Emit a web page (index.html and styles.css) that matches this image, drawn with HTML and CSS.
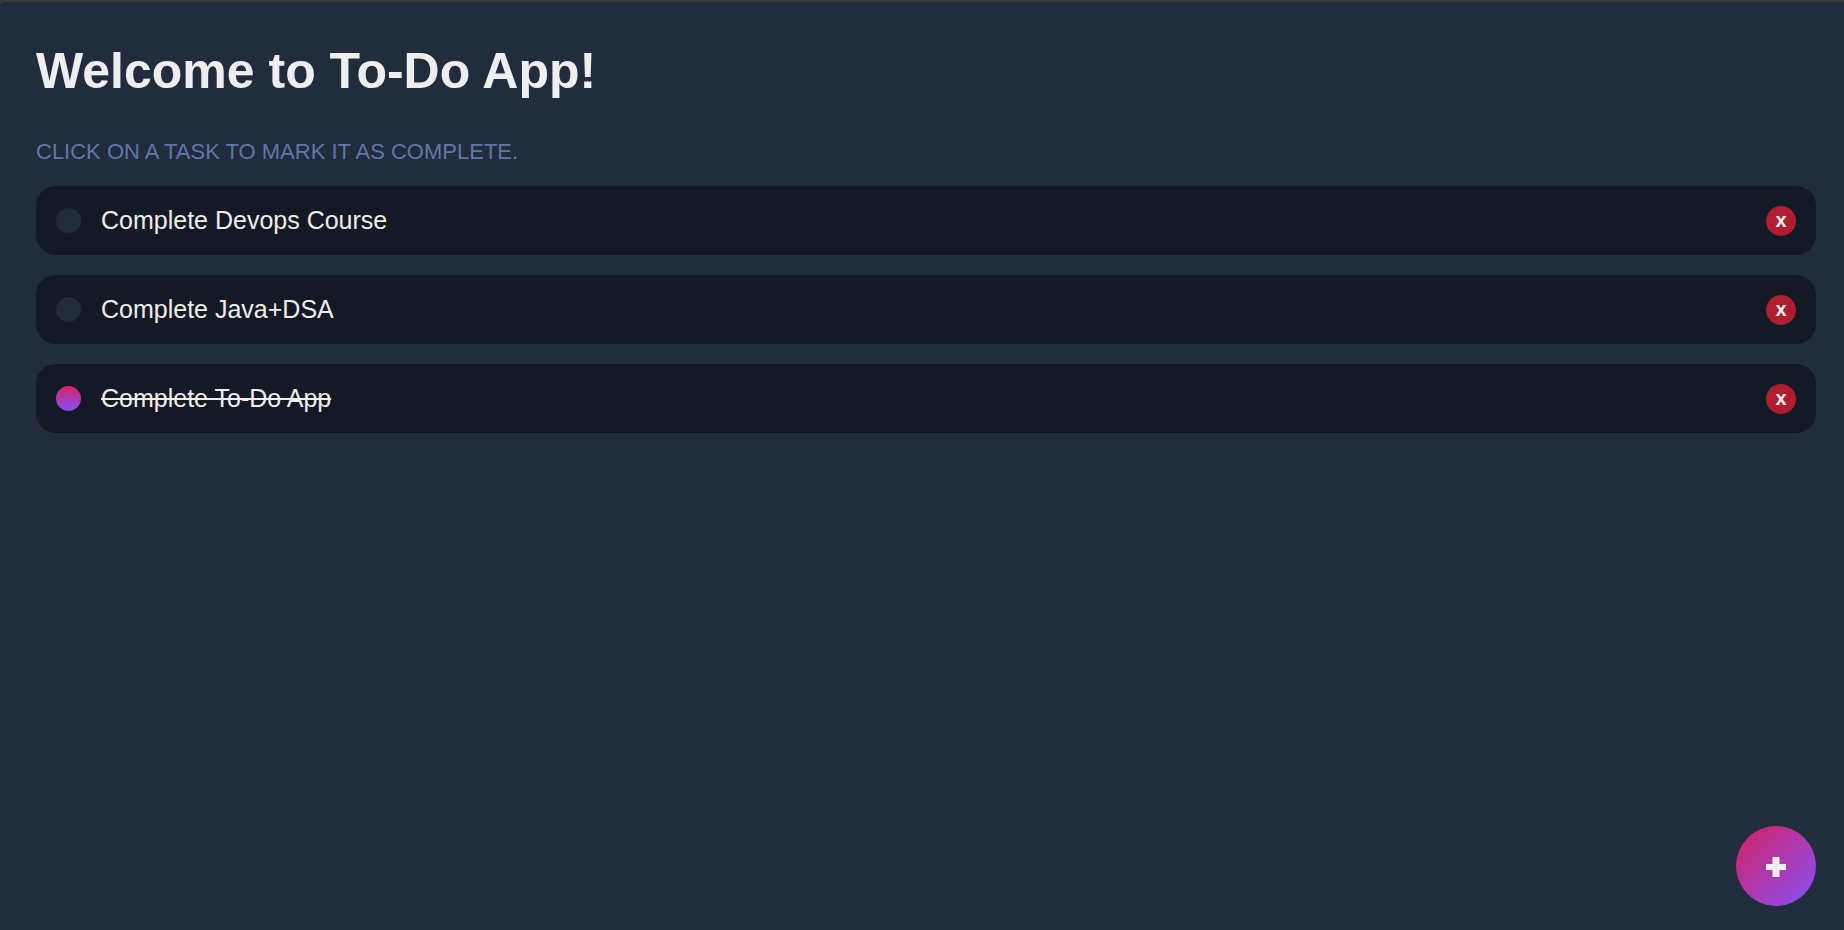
FILE: index.html
```html
<!DOCTYPE html>
<html lang="en">
<head>
<meta charset="utf-8">
<title>To-Do App</title>
<link rel="stylesheet" href="styles.css">
</head>
<body>
<main class="app">
  <h1 class="title">Welcome to To-Do App!</h1>
  <p class="hint">Click on a task to mark it as complete.</p>
  <ul class="tasks">
    <li class="task">
      <label class="task-label"><input class="task-check" type="checkbox"><span class="task-text">Complete Devops Course</span></label>
      <button class="delete" type="button" aria-label="Delete Complete Devops Course">x</button>
    </li>
    <li class="task">
      <label class="task-label"><input class="task-check" type="checkbox"><span class="task-text">Complete Java+DSA</span></label>
      <button class="delete" type="button" aria-label="Delete Complete Java+DSA">x</button>
    </li>
    <li class="task">
      <label class="task-label"><input class="task-check" type="checkbox" checked><span class="task-text">Complete To-Do App</span></label>
      <button class="delete" type="button" aria-label="Delete Complete To-Do App">x</button>
    </li>
  </ul>
  <button class="add" type="button" aria-label="Add task">
    <svg class="add-icon" viewBox="0 0 20 20" aria-hidden="true"><path d="M6.500 0h7v7H20v6h-6.500v7h-7v-7H0V7h6.500z" fill="currentColor"/></svg>
  </button>
</main>
</body>
</html>
```
FILE: styles.css
```css
* {
  box-sizing: border-box;
}

body {
  margin: 0;
  background: #3b3b3b;
  color: #eee;
  font-family: "Liberation Sans", Arial, sans-serif;
}

.app {
  display: flex;
  flex-direction: column;
  min-height: 100vh;
  padding: 40px 28px 24px 36px;
  border-top: 2px solid #3b3b3b;
  border-top-left-radius: 6px;
  background: #212c3d;
}

.title {
  margin: 0;
  font-size: 50px;
  line-height: 58px;
}

.hint {
  margin: 38px 0 20px;
  color: #5f78a9;
  font-size: 22px;
  line-height: 28px;
  text-transform: uppercase;
}

.tasks {
  display: flex;
  flex-direction: column;
  gap: 20px;
  margin: 0;
  padding: 0;
  list-style: none;
}

.task {
  display: flex;
  align-items: center;
  gap: 20px;
  padding: 20px;
  border-radius: 20px;
  background: #141a25;
}

.task-label {
  display: flex;
  flex: 1;
  align-items: center;
  gap: 20px;
  font-size: 25px;
  line-height: 29px;
  cursor: pointer;
}

.task-check {
  appearance: none;
  width: 25px;
  height: 25px;
  margin: 0;
  border-radius: 50%;
  background: #212c3d;
}

.task-check:checked {
  background: linear-gradient(#d62161, #8650fa);
}

.task-check:checked + .task-text {
  text-decoration: line-through;
}

.delete {
  width: 30px;
  height: 30px;
  margin: 0 0 -1px;
  padding: 0 0 2px;
  border: 0;
  border-radius: 50%;
  background: #ae1e2e;
  color: #eee;
  font: bold 20px/28px "Liberation Sans", Arial, sans-serif;
  cursor: pointer;
}

.add {
  display: grid;
  place-items: center;
  width: 80px;
  height: 80px;
  margin-top: auto;
  margin-left: auto;
  padding: 2px 0 0;
  border: 0;
  border-radius: 50%;
  background: linear-gradient(135deg, #d62161, #8650fa);
  color: #eee;
  cursor: pointer;
}

.add-icon {
  width: 20px;
  height: 20px;
}
```
